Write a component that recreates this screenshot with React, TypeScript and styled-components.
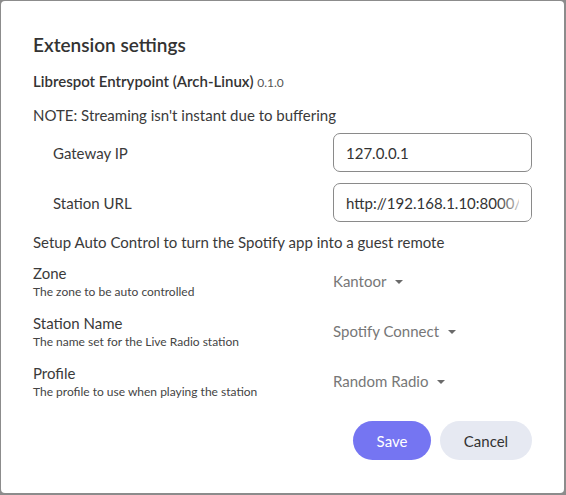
import React from "react";
import styled, { createGlobalStyle } from "styled-components";

const Global = createGlobalStyle`
  html, body { margin: 0; padding: 0; background: #8c8c8c; }
  body { font-family: Lato, "Open Sans", sans-serif; color: #333; }
  * { box-sizing: border-box; }
`;

const Frame = styled.div`
  width: 566px;
  height: 495px;
  padding: 1px 2px 2px 1px;
  display: flex;
`;

const Dialog = styled.div`
  flex: 1;
  background: #fff;
  border-radius: 4px;
  padding: 32px 32px 0 32px;
  display: flex;
  flex-direction: column;
`;

const Title = styled.h2`
  margin: 0;
  font-size: 19px;
  line-height: 24px;
  font-weight: 600;
  color: #333;
`;

const Subtitle = styled.div`
  margin-top: 14px;
  font-size: 15px;
  line-height: 20px;
  font-weight: 600;
  color: #333;
`;

const Version = styled.span`
  font-size: 12px;
  font-weight: 400;
  color: #555;
`;

const Para = styled.p<{ $top: number }>`
  margin: ${(p) => p.$top}px 0 0;
  font-size: 15px;
  line-height: 20px;
  color: #3a3a3a;
`;

const FieldList = styled.div`
  margin-top: 8px;
  display: flex;
  flex-direction: column;
  gap: 11px;
`;

const FieldRow = styled.div`
  display: grid;
  grid-template-columns: 1fr 199px;
  align-items: center;
  padding-left: 20px;
`;

const FieldLabel = styled.label`
  font-size: 15px;
  color: #3a3a3a;
`;

const InputWrap = styled.div`
  position: relative;
  height: 39px;
  border: 1px solid #8a8a8a;
  border-radius: 7px;
  overflow: hidden;
`;

const TextInput = styled.input`
  width: 100%;
  height: 100%;
  border: none;
  outline: none;
  padding: 0 12px;
  font-family: Lato, sans-serif;
  font-size: 15px;
  color: #333;
  background: transparent;
`;

const Fade = styled.div`
  position: absolute;
  top: 1px;
  bottom: 1px;
  right: 0;
  width: 34px;
  background: linear-gradient(to right, rgba(255,255,255,0), #fff 90%);
  pointer-events: none;
`;

const SelectList = styled.div`
  margin-top: 11px;
  display: flex;
  flex-direction: column;
  gap: 14px;
`;

const SelectRow = styled.div`
  display: grid;
  grid-template-columns: 1fr 199px;
  align-items: center;
`;

const SelectText = styled.div`
  display: flex;
  flex-direction: column;
`;

const SelectLabel = styled.div`
  font-size: 15px;
  line-height: 20px;
  color: #3a3a3a;
`;

const SelectHint = styled.div`
  margin-top: 2px;
  font-size: 12px;
  line-height: 14px;
  color: #444;
`;

const SelectValue = styled.div`
  display: flex;
  align-items: center;
  gap: 9px;
  height: 20px;
  font-size: 15px;
  color: #777;
`;

const Caret = styled.span`
  width: 0;
  height: 0;
  border-left: 4px solid transparent;
  border-right: 4px solid transparent;
  border-top: 4px solid #6a6a6a;
  margin-top: 1px;
`;

const Actions = styled.div`
  margin-top: 22px;
  display: flex;
  justify-content: flex-end;
  gap: 9px;
`;

const Button = styled.button<{ $primary?: boolean }>`
  height: 39px;
  padding: 0 ${(p) => (p.$primary ? 22 : 23)}px;
  border: none;
  border-radius: 20px;
  font-family: Lato, sans-serif;
  font-size: 15px;
  background: ${(p) => (p.$primary ? "#7575f2" : "#e6e9f2")};
  color: ${(p) => (p.$primary ? "#fff" : "#333")};
  min-width: ${(p) => (p.$primary ? 78 : 92)}px;
`;

const selects = [
  { label: "Zone", hint: "The zone to be auto controlled", value: "Kantoor" },
  { label: "Station Name", hint: "The name set for the Live Radio station", value: "Spotify Connect" },
  { label: "Profile", hint: "The profile to use when playing the station", value: "Random Radio" },
];

export default function App() {
  return (
    <Frame>
      <Global />
      <Dialog>
        <Title>Extension settings</Title>
        <Subtitle>
          Librespot Entrypoint (Arch-Linux) <Version>0.1.0</Version>
        </Subtitle>
        <Para $top={12}>NOTE: Streaming isn't instant due to buffering</Para>
        <FieldList>
          <FieldRow>
            <FieldLabel>Gateway IP</FieldLabel>
            <InputWrap>
              <TextInput defaultValue="127.0.0.1" />
            </InputWrap>
          </FieldRow>
          <FieldRow>
            <FieldLabel>Station URL</FieldLabel>
            <InputWrap>
              <TextInput defaultValue="http://192.168.1.10:8000/" />
              <Fade />
            </InputWrap>
          </FieldRow>
        </FieldList>
        <Para $top={10}>Setup Auto Control to turn the Spotify app into a guest remote</Para>
        <SelectList>
          {selects.map((s) => (
            <SelectRow key={s.label}>
              <SelectText>
                <SelectLabel>{s.label}</SelectLabel>
                <SelectHint>{s.hint}</SelectHint>
              </SelectText>
              <SelectValue>
                {s.value}
                <Caret />
              </SelectValue>
            </SelectRow>
          ))}
        </SelectList>
        <Actions>
          <Button $primary>Save</Button>
          <Button>Cancel</Button>
        </Actions>
      </Dialog>
    </Frame>
  );
}
